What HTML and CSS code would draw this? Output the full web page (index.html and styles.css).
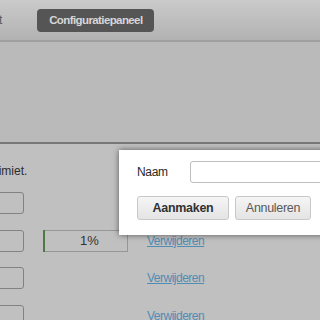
FILE: index.html
```html
<!DOCTYPE html>
<html lang="nl">

<head>
    <meta charset="UTF-8">
    <title>Configuratiepaneel</title>
    <link rel="stylesheet" href="styles.css">
</head>

<body>
    <div class="topbar">
        <span class="nav-item">Start</span>
        <button class="nav-button">Configuratiepaneel</button>
    </div>

    <div class="header-area"></div>

    <div class="content">
        <p class="note">Limiet.</p>

        <div class="row">
            <input type="text" class="field">
            <div class="progress-empty"></div>
            <a href="#" class="remove-link">Verwijderen</a>
        </div>
        <div class="row">
            <input type="text" class="field">
            <div class="progress"><span class="progress-fill"></span>1%</div>
            <a href="#" class="remove-link">Verwijderen</a>
        </div>
        <div class="row">
            <input type="text" class="field">
            <div class="progress-empty"></div>
            <a href="#" class="remove-link">Verwijderen</a>
        </div>
        <div class="row">
            <input type="text" class="field">
            <div class="progress-empty"></div>
            <a href="#" class="remove-link">Verwijderen</a>
        </div>
    </div>

    <div class="dialog">
        <div class="dialog-row">
            <label class="dialog-label">Naam</label>
            <input type="text" class="dialog-input">
        </div>
        <div class="dialog-buttons">
            <button class="dialog-btn dialog-btn-primary">Aanmaken</button>
            <button class="dialog-btn">Annuleren</button>
        </div>
    </div>
</body>

</html>
```

FILE: styles.css
```css
body {
    margin: 0;
    width: 320px;
    height: 320px;
    overflow: hidden;
    position: relative;
    background-color: rgb(192, 192, 192);
    font-family: "Liberation Sans", Arial, sans-serif;
    font-size: 12px;
    color: rgb(40, 40, 40);
}

.topbar {
    height: 40px;
    display: flex;
    align-items: center;
    background: linear-gradient(rgb(202, 202, 202), rgb(178, 178, 178));
    border-bottom: 2px solid rgb(160, 160, 160);
}

.nav-item {
    margin-left: -23px;
    margin-right: 35px;
    color: rgb(90, 90, 90);
    font-size: 12px;
}

.nav-button {
    border: none;
    background-color: rgb(85, 85, 85);
    color: rgb(215, 215, 215);
    font-family: "Liberation Sans", Arial, sans-serif;
    font-weight: bold;
    font-size: 11.5px;
    letter-spacing: -0.6px;
    width: 117px;
    height: 23px;
    padding: 0;
    border-radius: 4px;
}

.header-area {
    height: 100px;
    background-color: rgb(186, 186, 186);
    border-bottom: 2px solid rgb(120, 120, 120);
}

.content {
    padding-top: 20px;
}

.note {
    margin: 0;
    margin-left: -8px;
    height: 28px;
    line-height: 14px;
    color: rgb(45, 45, 45);
}

.row {
    display: flex;
    align-items: center;
    height: 22px;
    margin-bottom: 15.5px;
}

.field {
    width: 60px;
    height: 22px;
    box-sizing: border-box;
    margin-left: -36px;
    border: 1px solid rgb(130, 130, 130);
    border-radius: 3px;
    background-color: rgb(192, 192, 192);
}

.progress,
.progress-empty {
    width: 85px;
    height: 22px;
    box-sizing: border-box;
    margin-left: 19px;
    margin-right: 19px;
}

.progress {
    position: relative;
    border: 1px solid rgb(150, 150, 150);
    text-align: center;
    padding-left: 8px;
    line-height: 20px;
    font-size: 13px;
    color: rgb(50, 50, 50);
}

.progress-fill {
    position: absolute;
    left: -1px;
    top: -1px;
    bottom: -1px;
    width: 2px;
    background-color: rgb(80, 120, 70);
}

.remove-link {
    color: rgb(80, 140, 180);
    font-size: 12px;
    letter-spacing: -0.5px;
}

.dialog {
    position: absolute;
    left: 119px;
    top: 150px;
    width: 220px;
    height: 85px;
    box-sizing: border-box;
    background-color: white;
    box-shadow: 0 0 6px rgba(0, 0, 0, 0.55);
    padding-left: 18px;
    padding-top: 11px;
}

.dialog-row {
    display: flex;
    align-items: center;
    height: 22px;
}

.dialog-label {
    width: 53px;
    font-size: 12px;
    letter-spacing: -0.3px;
    color: rgb(40, 40, 40);
}

.dialog-input {
    width: 140px;
    height: 22px;
    box-sizing: border-box;
    border: 1px solid rgb(190, 190, 190);
    border-radius: 3px;
}

.dialog-buttons {
    display: flex;
    gap: 6px;
    margin-top: 13px;
}

.dialog-btn {
    width: 92px;
    height: 24px;
    border: 1px solid rgb(200, 200, 200);
    border-radius: 3px;
    background: linear-gradient(rgb(245, 245, 245), rgb(228, 228, 228));
    font-family: "Liberation Sans", Arial, sans-serif;
    font-size: 12.5px;
    letter-spacing: -0.3px;
    color: rgb(90, 90, 90);
}

.dialog-btn + .dialog-btn {
    width: 76px;
}

.dialog-btn-primary {
    font-weight: bold;
    color: rgb(50, 50, 50);
}
```
